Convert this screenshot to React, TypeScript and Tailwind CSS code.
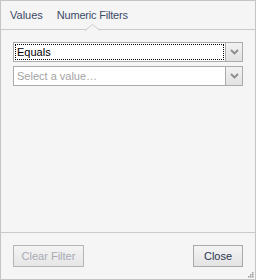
import React from 'react';

function Chevron() {
  return (
    <svg width="9" height="6" viewBox="0 0 9 6" className="block">
      <path d="M1 1 L4.5 4.5 L8 1" fill="none" stroke="#8c8c8c" strokeWidth="1.8" />
    </svg>
  );
}

function Combo({ text, placeholder, focused }: { text: string; placeholder?: boolean; focused?: boolean }) {
  return (
    <div className="flex h-[20px] w-[230px] border border-[#ababab] bg-white">
      <div className="flex flex-1 p-px">
        <div
          className={`flex flex-1 items-center pl-[1px] text-[11px] leading-none ${
            focused ? 'border border-dotted border-black' : 'border border-transparent'
          } ${placeholder ? 'text-[#a3a3a3]' : 'text-black'}`}
        >
          {text}
        </div>
      </div>
      <div className="flex w-[17px] items-center justify-center border-l border-[#ababab] bg-gradient-to-b from-[#f2f2f2] to-[#e2e2e2]">
        <Chevron />
      </div>
    </div>
  );
}

export default function App() {
  return (
    <div
      className="relative flex h-[280px] w-[256px] flex-col border border-[#c4c4c4] bg-[#f5f5f5]"
      style={{ fontFamily: '"Liberation Sans", Arial, sans-serif' }}
    >
      {/* Tabs */}
      <div className="relative flex h-[29px] items-center gap-[14px] border-b border-[#cacaca] pl-[9px] text-[11px] text-[#3b4a66]">
        <span>Values</span>
        <span className="tracking-[-0.2px]">Numeric Filters</span>
        <svg width="15" height="7" viewBox="0 0 15 7" className="absolute left-[84px] top-[23px]">
          <path d="M0 6.5 L7.5 0.5 L15 6.5" fill="#f5f5f5" stroke="#cacaca" strokeWidth="1" />
        </svg>
      </div>

      {/* Filters */}
      <div className="flex flex-1 flex-col gap-[4px] px-[12px] pt-[12px]">
        <Combo text="Equals" focused />
        <Combo text="Select a value…" placeholder />
      </div>

      {/* Footer */}
      <div className="flex justify-between border-t border-[#cacaca] px-[12px] pb-[12px] pt-[12px]">
        <button className="h-[22px] w-[71px] border border-[#b5b5b5] bg-gradient-to-b from-[#f4f4f4] to-[#e6e6e6] text-[11px] text-[#a9aab5]">
          Clear Filter
        </button>
        <button className="h-[22px] w-[50px] border border-[#a9a9a9] bg-gradient-to-b from-[#f4f4f4] to-[#e3e3e3] text-[11px] text-[#2a3550]">
          Close
        </button>
      </div>

      {/* Resize grip */}
      <svg width="7" height="7" viewBox="0 0 7 7" className="absolute bottom-[1px] right-[1px]">
        <rect x="5" y="1" width="1.5" height="1.5" fill="#a0a0a0" />
        <rect x="3" y="3" width="1.5" height="1.5" fill="#a0a0a0" />
        <rect x="5" y="3" width="1.5" height="1.5" fill="#a0a0a0" />
        <rect x="1" y="5" width="1.5" height="1.5" fill="#a0a0a0" />
        <rect x="3" y="5" width="1.5" height="1.5" fill="#a0a0a0" />
        <rect x="5" y="5" width="1.5" height="1.5" fill="#a0a0a0" />
      </svg>
    </div>
  );
}
